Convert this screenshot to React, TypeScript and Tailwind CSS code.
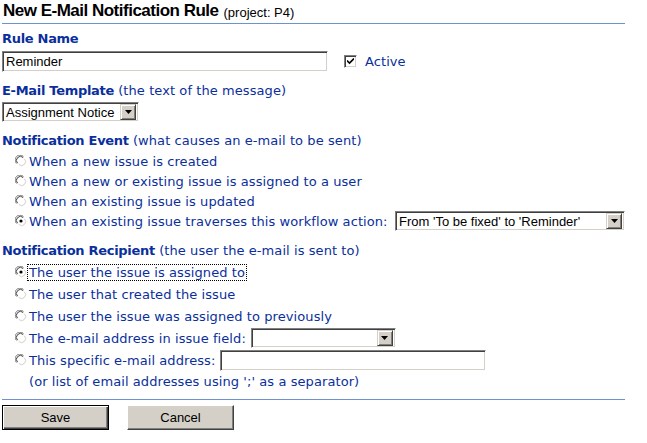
import React from "react";

const BLUE = "text-[#0a2f9c]";
const VERD = "font-['DejaVu_Sans',Verdana,sans-serif] tracking-[0.08px]";
const ARIAL = "font-['Liberation_Sans',Arial,sans-serif]";

const sunken =
  "border border-t-[#808080] border-l-[#808080] border-b-white border-r-white shadow-[inset_1px_1px_0_#404040,inset_-1px_-1px_0_#d4d0c8] bg-white";

const Radio = ({ checked = false }: { checked?: boolean }) => (
  <svg width="12" height="12" viewBox="0 0 12 12" className="shrink-0">
    <path d="M1.5 8.5 A4.7 4.7 0 0 1 8.5 1.5" fill="none" stroke="#808080" strokeWidth="1" />
    <path d="M2.6 8.2 A3.6 3.6 0 0 1 8.2 2.6" fill="none" stroke="#404040" strokeWidth="1" />
    <path d="M10.5 3.5 A4.7 4.7 0 0 1 3.5 10.5" fill="none" stroke="#ffffff" strokeWidth="1" />
    <path d="M9.4 3.8 A3.6 3.6 0 0 1 3.8 9.4" fill="none" stroke="#d4d0c8" strokeWidth="1" />
    <circle cx="6" cy="6" r="3.2" fill="#fff" />
    {checked && <circle cx="6" cy="6" r="1.6" fill="#000" />}
  </svg>
);

const Arrow = () => (
  <div className="w-[16px] h-[16px] shrink-0 bg-[#d4d0c8] border border-t-[#d4d0c8] border-l-[#d4d0c8] border-b-[#404040] border-r-[#404040] shadow-[inset_1px_1px_0_#fff,inset_-1px_-1px_0_#808080] flex items-center justify-center">
    <svg width="7" height="4" viewBox="0 0 7 4">
      <path d="M0 0h7L3.5 4z" fill="#000" />
    </svg>
  </div>
);

const Select = ({ value, className }: { value: string; className: string }) => (
  <div className={`${sunken} ${className} flex items-center p-[2px]`}>
    <span className={`${ARIAL} text-[13px] text-black flex-1 pl-[1px] leading-none whitespace-nowrap`}>{value}</span>
    <Arrow />
  </div>
);

const Label = ({ title, hint, className }: { title: string; hint?: string; className: string }) => (
  <div className={`${className} h-[16px] leading-[16px] ${VERD} text-[13px] ${BLUE} whitespace-nowrap`}>
    <span className="font-bold tracking-[-0.3px]">{title}</span>
    {hint && <span> {hint}</span>}
  </div>
);

const RadioRow = ({
  label,
  checked,
  h,
  focus,
  children,
}: {
  label: string;
  checked?: boolean;
  h: string;
  focus?: boolean;
  children?: React.ReactNode;
}) => (
  <div className={`${h} flex items-center pl-[13px]`}>
    <Radio checked={checked} />
    <span
      className={`ml-[1px] px-[1px] ${VERD} text-[13px] ${BLUE} whitespace-nowrap leading-[15px] ${
        focus ? "outline outline-1 outline-dotted outline-black" : ""
      }`}
    >
      {label}
    </span>
    {children}
  </div>
);

const Button = ({ label, primary }: { label: string; primary?: boolean }) => (
  <div
    className={`w-[107px] h-[25px] bg-[#d4d0c8] flex items-center justify-center ${ARIAL} text-[13px] text-black ${
      primary
        ? "border border-black shadow-[inset_1px_1px_0_#fff,inset_-1px_-1px_0_#404040,inset_-2px_-2px_0_#808080]"
        : "border border-t-white border-l-white border-b-[#404040] border-r-[#404040] shadow-[inset_-1px_-1px_0_#808080]"
    }`}
  >
    {label}
  </div>
);

export default function App() {
  return (
    <div className="w-[647px] h-[443px] bg-white pl-[2px] overflow-hidden">
      <div className="w-[623px]">
        <div className="h-[24px] border-b border-[#6f92cc] pl-[1px] flex items-end pb-[4px]">
          <span className={`${ARIAL} text-[17px] tracking-[-0.5px] font-bold text-black leading-none`}>
            New E-Mail Notification Rule
          </span>
          <span className={`${ARIAL} text-[13px] text-black leading-none ml-[5px]`}>(project: P4)</span>
        </div>

        <Label title="Rule Name" className="mt-[7px] mb-[4px]" />
        <div className="h-[21px] flex items-center">
          <div className={`${sunken} w-[326px] h-[21px] flex items-center pl-[3px]`}>
            <span className={`${ARIAL} text-[13px] text-black leading-none`}>Reminder</span>
          </div>
          <div className="ml-[16px] w-[13px] h-[13px] bg-white border border-t-[#808080] border-l-[#808080] border-b-white border-r-white shadow-[inset_1px_1px_0_#404040,inset_-1px_-1px_0_#d4d0c8] flex items-center justify-center">
            <svg width="7" height="7" viewBox="0 0 7 7">
              <path d="M0 2.5l2.5 2.5L7 0.5" fill="none" stroke="#000" strokeWidth="1.6" />
            </svg>
          </div>
          <span className={`ml-[8px] ${VERD} text-[13px] ${BLUE}`}>Active</span>
        </div>

        <Label title="E-Mail Template" hint="(the text of the message)" className="mt-[11px] mb-[3px]" />
        <Select value="Assignment Notice" className="w-[137px] h-[20px]" />

        <Label title="Notification Event" hint="(what causes an e-mail to be sent)" className="mt-[11px] mb-[2px]" />
        <RadioRow h="h-[20px]" label="When a new issue is created" />
        <RadioRow h="h-[20px]" label="When a new or existing issue is assigned to a user" />
        <RadioRow h="h-[20px]" label="When an existing issue is updated" />
        <RadioRow h="h-[20px]" checked label="When an existing issue traverses this workflow action:">
          <Select value="From 'To be fixed' to 'Reminder'" className="ml-auto w-[230px] h-[20px]" />
        </RadioRow>

        <Label title="Notification Recipient" hint="(the user the e-mail is sent to)" className="mt-[12px] mb-[2px]" />
        <RadioRow h="h-[22px]" checked focus label="The user the issue is assigned to" />
        <RadioRow h="h-[22px]" label="The user that created the issue" />
        <RadioRow h="h-[22px]" label="The user the issue was assigned to previously" />
        <RadioRow h="h-[22px]" label="The e-mail address in issue field:">
          <Select value="" className="ml-[4px] w-[145px] h-[20px]" />
        </RadioRow>
        <RadioRow h="h-[22px]" label="This specific e-mail address:">
          <div className={`${sunken} ml-[4px] w-[266px] h-[21px]`} />
        </RadioRow>
        <div className={`h-[22px] flex items-center pl-[27px] ${VERD} text-[13px] ${BLUE} whitespace-nowrap`}>
          (or list of email addresses using ';' as a separator)
        </div>

        <div className="mt-[6px] border-b border-[#6f92cc]" />
        <div className="mt-[5px] flex gap-[18px]">
          <Button label="Save" primary />
          <Button label="Cancel" />
        </div>
      </div>
    </div>
  );
}
